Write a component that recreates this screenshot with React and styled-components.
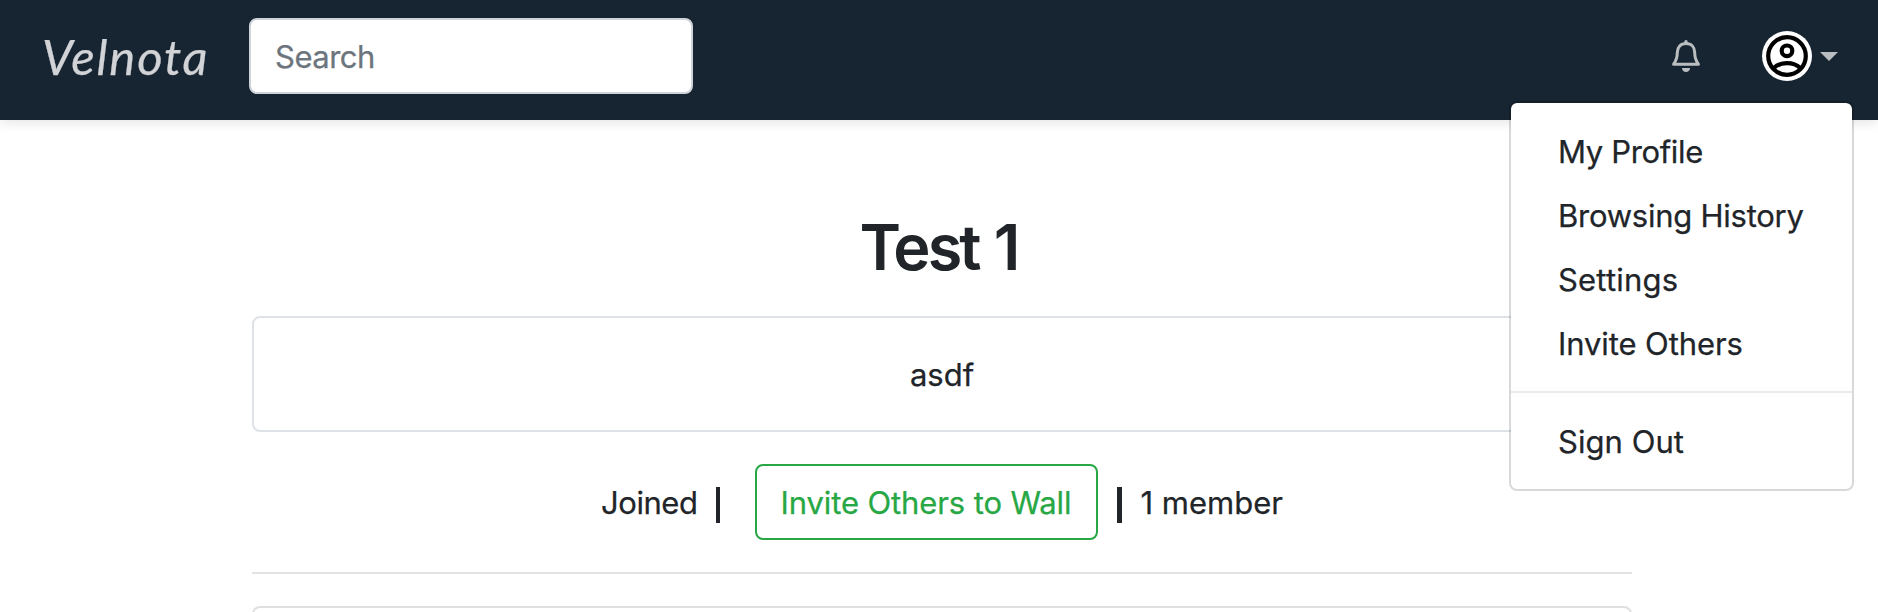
import React from "react";
import styled, { createGlobalStyle } from "styled-components";

const Global = createGlobalStyle`
  *, *::before, *::after { box-sizing: border-box; }
  body { margin: 0; background: #fff; }
`;

const Page = styled.div`
  position: relative;
  height: 612px;
  overflow: hidden;
  font: 400 31px/48px Inter, "Liberation Sans", sans-serif;
  color: #212529;
  -webkit-text-stroke: 0.25px currentColor;
`;

const Navbar = styled.header`
  display: flex;
  align-items: center;
  height: 120px;
  padding: 0 40px 8px 42px;
  background: #172431;
  box-shadow: 0 4px 10px rgba(0, 0, 0, 0.09);
`;

const Brand = styled.a`
  width: 207px;
  font: italic 400 49px/60px Lato, "Liberation Sans", sans-serif;
  letter-spacing: 1.8px;
  color: #d1d3d6;
`;

const Search = styled.input`
  width: 444px;
  height: 76px;
  padding: 0 24px;
  border: 2px solid #ced4da;
  border-radius: 8px;
  background: #fff;
  font: inherit;
  letter-spacing: -0.5px;
  &::placeholder { color: #6c757d; opacity: 1; }
`;

const Actions = styled.nav`
  display: flex;
  align-items: center;
  margin-left: auto;
`;

const IconButton = styled.button`
  display: flex;
  align-items: center;
  gap: 8px;
  margin-left: ${(p) => p.$offset || 0}px;
  padding: 0;
  border: 0;
  background: none;
  color: #babec1;
`;

const Caret = styled.span`
  border: 9px solid transparent;
  border-top-color: currentColor;
  border-bottom: 0;
`;

const Menu = styled.div`
  position: absolute;
  top: 101px;
  left: 1509px;
  width: 345px;
  padding: 16px 0;
  border: 2px solid rgba(0, 0, 0, 0.15);
  border-radius: 8px;
  background: #fff;
  background-clip: padding-box;
`;

const MenuItem = styled.a`
  display: block;
  padding: 9px 46px 7px 47px;
  white-space: nowrap;
  letter-spacing: ${(p) => p.$track || 0}px;
`;

const MenuDivider = styled.div`
  height: 2px;
  margin: 16px 0;
  background: #e9ecef;
`;

const Content = styled.main`
  width: 1380px;
  margin: 89px auto 0 252px;
  text-align: center;
`;

const Title = styled.h1`
  margin: 0 0 30px;
  padding-right: 7px;
  font-size: 63px;
  line-height: 77px;
  font-weight: 600;
  letter-spacing: -2.9px;
  word-spacing: 2px;
  -webkit-text-stroke: 0;
`;

const Card = styled.section`
  height: ${(p) => p.$height}px;
  padding: 33px 32px 31px;
  border: 2px solid ${(p) => p.$border};
  border-radius: 8px;
`;

const WallInfo = styled.div`
  display: flex;
  align-items: center;
  height: 76px;
  margin: 32px 0;
  padding-left: 349px;
  white-space: nowrap;
`;

const Status = styled.span`
  width: ${(p) => p.$width}px;
  padding-top: 2px;
  text-align: left;
  letter-spacing: ${(p) => p.$track || 0}px;
`;

const Bar = styled.span`
  width: ${(p) => p.$width}px;
  height: 36px;
  margin: ${(p) => p.$margin};
  background: #212529;
`;

const InviteButton = styled.button`
  width: 343px;
  height: 76px;
  padding: 2px 0 0;
  border: 2px solid #28a745;
  border-radius: 8px;
  background: #fff;
  color: #28a745;
  font: inherit;
  letter-spacing: -0.12px;
  -webkit-text-stroke: 0.25px #28a745;
`;

const Rule = styled.hr`
  height: 2px;
  margin: 0 0 32px;
  border: 0;
  background: #e3e3e3;
`;

const Bell = () => (
  <svg width="28" height="32" viewBox="0 0 28 32" fill="none" stroke="currentColor">
    <path strokeWidth="3" strokeLinejoin="round" d="M1.6 24.2 C4.8 20 5.3 17 5.3 12.5 C5.3 7 8.7 3.6 14 3.6 C19.3 3.6 22.7 7 22.7 12.5 C22.7 17 23.2 20 26.4 24.2 Z" />
    <path strokeWidth="3.4" strokeLinecap="round" d="M14 1.8 V3" />
    <path stroke="none" fill="currentColor" d="M10 28 H18 C18 33.3 10 33.3 10 28 Z" />
  </svg>
);

const Avatar = () => (
  <svg width="50" height="50" viewBox="0 0 50 50" fill="none" stroke="#000" strokeWidth="4.2">
    <circle cx="25" cy="25" r="25" fill="#fff" stroke="none" />
    <circle cx="25" cy="25" r="18.8" />
    <circle cx="25" cy="19.8" r="5.3" />
    <path d="M11.5 37.2 C15 33.8 19.5 32.2 25 32.2 C30.5 32.2 35 33.8 38.5 37.2" />
  </svg>
);

export default function App() {
  return (
    <Page>
      <Global />
      <Navbar>
        <Brand>Velnota</Brand>
        <Search placeholder="Search" />
        <Actions>
          <IconButton aria-label="Notifications"><Bell /></IconButton>
          <IconButton aria-label="Account" $offset={62}><Avatar /><Caret /></IconButton>
        </Actions>
      </Navbar>
      <Content>
        <Title>Test 1</Title>
        <Card $height={116} $border="#dee2e6">asdf</Card>
        <WallInfo>
          <Status $width={96} $track={-0.45}>Joined</Status>
          <Bar $width={4} $margin="6px 34.5px 0 19px" />
          <InviteButton>Invite Others to Wall</InviteButton>
          <Bar $width={5} $margin="6px 19px 0 19px" />
          <Status $width={150}>1 member</Status>
        </WallInfo>
        <Rule />
        <Card $height={120} $border="#dfdfdf" />
      </Content>
      <Menu>
        <MenuItem $track={-0.35}>My Profile</MenuItem>
        <MenuItem $track={-0.25}>Browsing History</MenuItem>
        <MenuItem $track={0.2}>Settings</MenuItem>
        <MenuItem $track={-0.1}>Invite Others</MenuItem>
        <MenuDivider />
        <MenuItem $track={0.05}>Sign Out</MenuItem>
      </Menu>
    </Page>
  );
}
